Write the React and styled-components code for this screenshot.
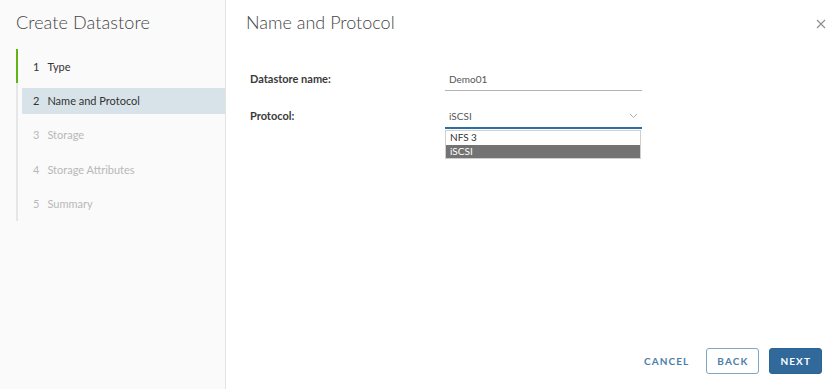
import React, { useState } from 'react';
import styled, { createGlobalStyle } from 'styled-components';

const GlobalStyle = createGlobalStyle`
  html, body {
    margin: 0;
    padding: 0;
    background: #ffffff;
    font-family: Lato, "Open Sans", sans-serif;
    color: #333333;
  }
`;

const Wizard = styled.div`
  display: flex;
  width: 840px;
  height: 389px;
  overflow: hidden;
`;

const Sidebar = styled.aside`
  width: 226px;
  flex-shrink: 0;
  background: #fafafa;
  border-right: 1px solid #e3e3e3;
  padding-top: 11px;
  box-sizing: border-box;
`;

const SidebarTitle = styled.h1`
  margin: 0 0 0 16px;
  font-size: 18px;
  font-weight: 300;
  color: #454545;
  letter-spacing: 0.1px;
  line-height: 22px;
`;

const StepList = styled.ol`
  list-style: none;
  margin: 16px 0 0 16px;
  padding: 0;
  border-left: 2px solid #e6e6e6;
`;

const Step = styled.li`
  position: relative;
  display: flex;
  align-items: center;
  height: 34.4px;
  font-size: 11px;
  color: ${p => (p.$state === 'todo' ? '#b8b8b8' : '#333333')};

  ${p =>
    p.$state === 'done' &&
    `
    &::before {
      content: '';
      position: absolute;
      left: -2px;
      top: 0;
      bottom: 0;
      width: 2px;
      background: #60b515;
    }
  `}
`;

const StepInner = styled.div`
  display: flex;
  align-items: center;
  gap: 8px;
  margin-left: 4px;
  padding-left: 11px;
  height: 26px;
  flex: 1;
  background: ${p => (p.$active ? '#d8e3e9' : 'transparent')};
`;

const Main = styled.main`
  flex: 1;
  display: flex;
  flex-direction: column;
  padding: 11px 18px 15px 20px;
  box-sizing: border-box;
`;

const Header = styled.div`
  display: flex;
  justify-content: space-between;
  align-items: center;
`;

const Title = styled.h2`
  margin: 0;
  font-size: 18px;
  font-weight: 300;
  color: #454545;
  line-height: 22px;
`;

const CloseButton = styled.button`
  border: none;
  background: none;
  padding: 0;
  margin: 4px -4px 0 0;
  display: flex;
  cursor: pointer;
`;

const Form = styled.div`
  margin: 34px 0 0 4px;
  display: flex;
  flex-direction: column;
  gap: 13px;
`;

const Row = styled.div`
  display: grid;
  grid-template-columns: 195px 197px;
  align-items: start;
`;

const Label = styled.label`
  font-size: 11px;
  font-weight: 700;
  color: #3a3a3a;
  line-height: 23px;
`;

const Field = styled.div`
  position: relative;
  display: flex;
  align-items: center;
  justify-content: space-between;
  height: 23px;
  padding: 0 4px;
  font-size: 10px;
  color: #565656;
  border-bottom: ${p => (p.$focused ? '2px solid #2e6fa3' : '1px solid #b3b3b3')};
`;

const Menu = styled.ul`
  position: absolute;
  top: 26px;
  left: 0;
  right: 1px;
  margin: 0;
  padding: 0;
  list-style: none;
  border: 1px solid #cfcfcf;
  background: #ffffff;
  z-index: 2;
`;

const Option = styled.li`
  height: 13.5px;
  line-height: 13.5px;
  padding: 0 4px;
  font-size: 10px;
  background: ${p => (p.$selected ? '#737373' : '#ffffff')};
  color: ${p => (p.$selected ? '#ffffff' : '#333333')};
`;

const Footer = styled.div`
  margin-top: auto;
  display: flex;
  justify-content: flex-end;
  align-items: center;
  gap: 10px;
`;

const Button = styled.button`
  height: 26px;
  padding: 0 ${p => (p.$variant === 'link' ? '6px' : '10px')};
  border-radius: 3px;
  font-family: inherit;
  font-size: 10px;
  font-weight: 700;
  letter-spacing: 1.1px;
  text-transform: uppercase;
  cursor: pointer;
  border: 1px solid
    ${p => (p.$variant === 'link' ? 'transparent' : p.$variant === 'primary' ? '#2a6494' : '#7fa6c4')};
  background: ${p => (p.$variant === 'primary' ? '#31699b' : '#ffffff')};
  color: ${p => (p.$variant === 'primary' ? '#ffffff' : '#4d7ea8')};
`;

const steps = ['Type', 'Name and Protocol', 'Storage', 'Storage Attributes', 'Summary'];

const Chevron = () => (
  <svg width="9" height="6" viewBox="0 0 9 6">
    <path d="M1 1l3.5 3.5L8 1" fill="none" stroke="#aeaeae" strokeWidth="1" />
  </svg>
);

const CloseIcon = () => (
  <svg width="10" height="10" viewBox="0 0 10 10">
    <path d="M1 1l8 8M9 1l-8 8" stroke="#8c8c8c" strokeWidth="1.1" />
  </svg>
);

const App = () => {
  const [name] = useState('Demo01');
  const current = 1;

  return (
    <>
      <GlobalStyle />
      <Wizard>
        <Sidebar>
          <SidebarTitle>Create Datastore</SidebarTitle>
          <StepList>
            {steps.map((label, i) => {
              const state = i < current ? 'done' : i === current ? 'active' : 'todo';
              return (
                <Step key={label} $state={state}>
                  <StepInner $active={state === 'active'}>
                    <span>{i + 1}</span>
                    <span>{label}</span>
                  </StepInner>
                </Step>
              );
            })}
          </StepList>
        </Sidebar>

        <Main>
          <Header>
            <Title>Name and Protocol</Title>
            <CloseButton aria-label="Close">
              <CloseIcon />
            </CloseButton>
          </Header>

          <Form>
            <Row>
              <Label>Datastore name:</Label>
              <Field>{name}</Field>
            </Row>
            <Row>
              <Label>Protocol:</Label>
              <Field $focused>
                <span>iSCSI</span>
                <Chevron />
                <Menu>
                  <Option>NFS 3</Option>
                  <Option $selected>iSCSI</Option>
                </Menu>
              </Field>
            </Row>
          </Form>

          <Footer>
            <Button $variant="link">Cancel</Button>
            <Button>Back</Button>
            <Button $variant="primary">Next</Button>
          </Footer>
        </Main>
      </Wizard>
    </>
  );
};

export default App;
